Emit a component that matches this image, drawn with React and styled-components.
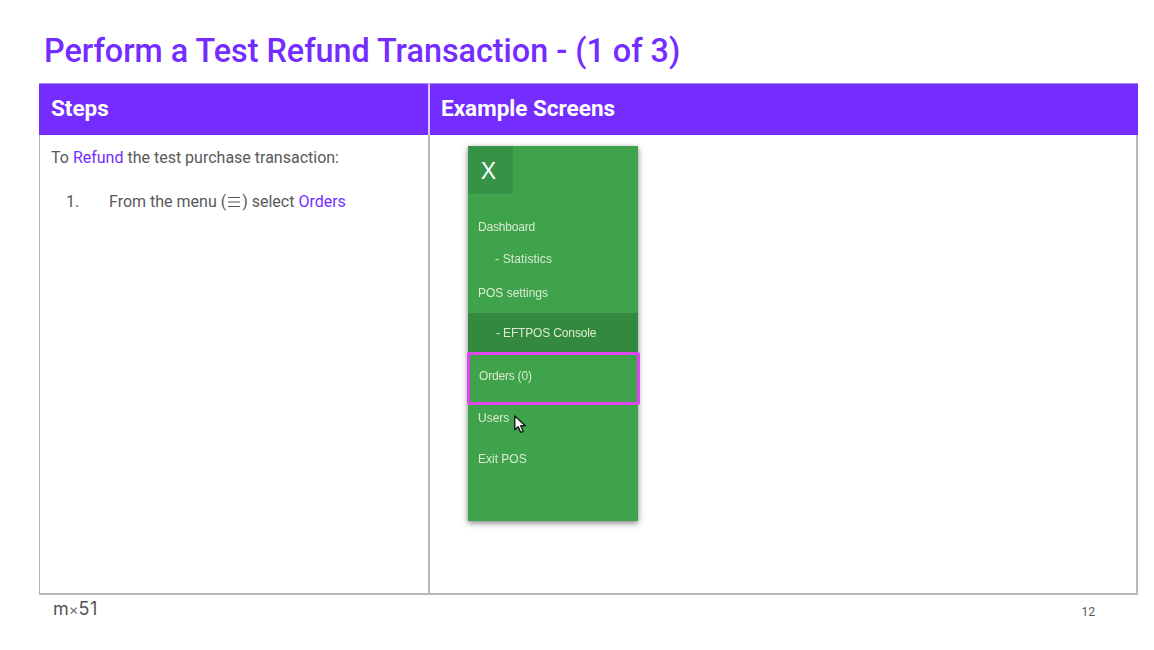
import React from "react";
import styled, { createGlobalStyle } from "styled-components";

const GlobalStyle = createGlobalStyle`
  html, body {
    margin: 0;
    padding: 0;
    background: #fff;
  }
  body {
    font-family: Roboto, "Liberation Sans", sans-serif;
  }
`;

const PURPLE = "#742cff";

const menuItems = [
  { label: "Dashboard", height: 32, spacing: -0.2 },
  { label: "- Statistics", height: 32, sub: true, spacing: 0.15 },
  { label: "POS settings", height: 35, spacing: 0 },
];

export default function App() {
  return (
    <Slide>
      <GlobalStyle />
      <Title>Perform a Test Refund Transaction - (1 of 3)</Title>
      <Table>
        <HeadCell>Steps</HeadCell>
        <HeadCell $last>Example Screens</HeadCell>
        <StepsCell>
          <Intro>
            To <Accent>Refund</Accent> the test purchase transaction:
          </Intro>
          <Step>
            <StepNumber>1.</StepNumber>
            <span>
              From the menu (<MenuGlyph />) select <Accent>Orders</Accent>
            </span>
          </Step>
        </StepsCell>
        <ScreensCell>
          <Menu>
            <CloseTile>X</CloseTile>
            <MenuList>
              {menuItems.map((item) => (
                <MenuRow
                  key={item.label}
                  $height={item.height}
                  $sub={item.sub}
                  $spacing={item.spacing}
                >
                  <MenuLabel>{item.label}</MenuLabel>
                </MenuRow>
              ))}
              <ActiveRow>
                <MenuLabel>- EFTPOS Console</MenuLabel>
              </ActiveRow>
              <OrdersRow>
                <MenuLabel>Orders (0)</MenuLabel>
              </OrdersRow>
              <UsersRow>
                <MenuLabel>Users</MenuLabel>
                <Cursor />
              </UsersRow>
              <MenuRow $height={56}>
                <MenuLabel>Exit POS</MenuLabel>
              </MenuRow>
            </MenuList>
          </Menu>
        </ScreensCell>
      </Table>
      <Footer>
        <Logo>
          m<LogoCross>×</LogoCross>
          <LogoDigits>51</LogoDigits>
        </Logo>
        <PageNumber>12</PageNumber>
      </Footer>
    </Slide>
  );
}

function MenuGlyph() {
  return (
    <GlyphSvg viewBox="0 0 14 12" aria-hidden="true">
      <path d="M1 1.5h12M1 6h12M1 10.5h12" stroke="#555" strokeWidth="1.2" fill="none" />
    </GlyphSvg>
  );
}

function Cursor() {
  return (
    <CursorSvg viewBox="0 0 14 20" aria-hidden="true">
      <path
        d="M1.5 1v14.5l3.6-3.2 2.5 6 2.7-1.2-2.5-5.8h4.8z"
        fill="#fff"
        stroke="#1c1c1c"
        strokeWidth="1.5"
        strokeLinejoin="round"
      />
    </CursorSvg>
  );
}

const Slide = styled.div`
  width: 1154px;
  height: 650px;
  box-sizing: border-box;
  padding: 32px 17px 0 39px;
  overflow: hidden;
  background: #fff;
`;

const Title = styled.h1`
  margin: 0 0 13px 5px;
  font-size: 32.35px;
  line-height: 38px;
  font-weight: 500;
  color: ${PURPLE};
`;

const Table = styled.div`
  display: grid;
  grid-template-columns: 391px 708px;
  grid-template-rows: 52px 460px;
  width: 1099px;
`;

const HeadCell = styled.div`
  display: flex;
  align-items: center;
  box-sizing: border-box;
  padding: 0 0 3px ${(p) => (p.$last ? 11 : 12)}px;
  background: ${PURPLE};
  color: #fff;
  font-size: 22.5px;
  font-weight: 700;
  border-top: 1px solid #a987fb;
  border-right: ${(p) => (p.$last ? "0" : "2px solid #d9ccfb")};
`;

const StepsCell = styled.div`
  box-sizing: border-box;
  padding: 13px 0 0 11px;
  border-left: 1px solid #b3b3b3;
  border-right: 2px solid #b8b8b8;
  border-bottom: 2px solid #b8b8b8;
  color: #595959;
  font-size: 16px;
  line-height: 19px;
`;

const ScreensCell = styled.div`
  box-sizing: border-box;
  padding: 11px 0 0 38px;
  border-right: 2px solid #b8b8b8;
  border-bottom: 2px solid #b8b8b8;
`;

const Intro = styled.div`
  margin-bottom: 25px;
`;

const Step = styled.div`
  display: flex;
  padding-left: 15px;
`;

const StepNumber = styled.span`
  width: 43px;
`;

const Accent = styled.span`
  color: ${PURPLE};
`;

const GlyphSvg = styled.svg`
  display: inline-block;
  width: 14px;
  height: 12px;
  margin: 0 1px;
  vertical-align: -1px;
`;

const Menu = styled.div`
  width: 170px;
  height: 375px;
  background: #3ea34a;
  box-shadow: 0 2px 6px rgba(0, 0, 0, 0.5);
  font-family: "Liberation Sans", Arial, sans-serif;
`;

const CloseTile = styled.div`
  display: flex;
  align-items: center;
  justify-content: center;
  box-sizing: border-box;
  width: 45px;
  height: 48px;
  padding: 3px 4px 0 0;
  background: #369246;
  color: #fff;
  font-size: 23px;
`;

const MenuList = styled.div`
  display: flex;
  flex-direction: column;
  padding-top: 17px;
`;

const MenuRow = styled.div`
  display: flex;
  align-items: center;
  box-sizing: border-box;
  height: ${(p) => p.$height}px;
  padding-left: ${(p) => (p.$sub ? 27 : 10)}px;
  color: #dcebd2;
  font-size: 12px;
  letter-spacing: ${(p) => p.$spacing || 0}px;
`;

const MenuLabel = styled.span`
  filter: blur(0.4px);
`;

const ActiveRow = styled(MenuRow)`
  height: 39px;
  margin-top: 3px;
  padding: 1px 0 0 28px;
  background: #338a3e;
  letter-spacing: -0.15px;
`;

const OrdersRow = styled(MenuRow)`
  height: 53px;
  margin: 0 -2px 0 -1px;
  padding: 0 0 5px 9px;
  border: 3px solid #dc46ec;
  border-radius: 2px;
  letter-spacing: -0.2px;
`;

const UsersRow = styled(MenuRow)`
  position: relative;
  height: 26px;
`;

const CursorSvg = styled.svg`
  position: absolute;
  left: 45px;
  top: 10px;
  width: 14px;
  height: 19px;
`;

const Footer = styled.div`
  display: flex;
  align-items: center;
  justify-content: space-between;
  width: 1042px;
  padding: 4px 0 0 14px;
`;

const Logo = styled.div`
  font-family: Inter, "Liberation Sans", sans-serif;
  font-size: 18px;
  line-height: 20px;
  color: #555;
`;

const LogoCross = styled.span`
  font-size: 15px;
  font-weight: 300;
`;

const LogoDigits = styled.span`
  font-size: 18px;
  letter-spacing: 0.5px;
`;

const PageNumber = styled.div`
  margin-top: 4px;
  font-size: 12px;
  color: #595959;
`;
